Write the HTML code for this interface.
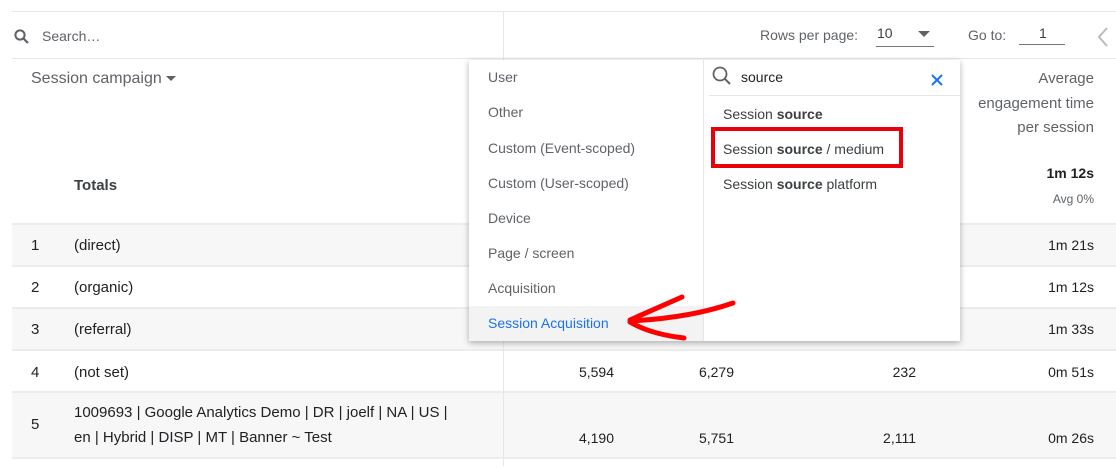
<!DOCTYPE html>
<html><head><style>
body{margin:0;width:1116px;height:466px;overflow:hidden;background:#fff;font-family:"Liberation Sans",Arial,sans-serif;color:#3c4043;position:relative}
.a{position:absolute;white-space:nowrap}
.hl{position:absolute;left:12px;right:0;height:1px;background:#e6e6e6}
.row{position:absolute;left:12px;right:0;border-top:2px solid #ececec}
.g{background:#f7f7f7}
.n{font-size:15px;color:#202124}
.r{text-align:right}
.m{font-size:14px;color:#5f6368}
.mi{position:absolute;left:488px;font-size:14px;color:#5f6368}
</style></head><body>
<div class="hl" style="top:11px"></div>
<div class="hl" style="top:58px"></div>
<div class="a" style="left:503px;top:12px;width:1px;height:454px;background:#e6e6e6"></div>
<svg class="a" style="left:13px;top:28px" width="18" height="18" viewBox="0 0 18 18"><circle cx="7" cy="7" r="4.6" fill="none" stroke="#5f6368" stroke-width="2"/><path d="M10.3 10.3L15 15" stroke="#5f6368" stroke-width="2.2"/></svg>
<div class="a m" style="left:42px;top:28px">Search…</div>
<div class="a m" style="left:760px;top:27px;font-size:14px">Rows per page:</div>
<div class="a m" style="left:877px;top:25px;color:#3c4043">10</div>
<div class="a" style="left:876px;top:46px;width:58px;height:1px;background:#777"></div>
<div class="a" style="left:918px;top:31px;width:0;height:0;border-left:6px solid transparent;border-right:6px solid transparent;border-top:6px solid #5f6368"></div>
<div class="a m" style="left:968px;top:27px">Go to:</div>
<div class="a m" style="left:1039px;top:25px;color:#3c4043">1</div>
<div class="a" style="left:1019px;top:44px;width:46px;height:1px;background:#777"></div>
<svg class="a" style="left:1096px;top:26px" width="14" height="22"><path d="M11 2L3 11L11 20" fill="none" stroke="#bbb" stroke-width="2"/></svg>
<div class="a" style="left:31px;top:70px;font-size:16px;color:#5f6368">Session campaign <span style="display:inline-block;width:0;height:0;border-left:5px solid transparent;border-right:5px solid transparent;border-top:5px solid #5f6368;vertical-align:middle"></span></div>
<div class="a n" style="left:74px;top:177px;font-weight:bold;color:#3c4043;font-size:15px">Totals</div>
<div class="a r" style="right:22px;top:67px;font-size:15px;color:#5f6368;line-height:24.5px">Average<br>engagement time<br>per session</div>
<div class="a" style="right:22px;top:165px;font-size:14px;font-weight:bold;color:#202124">1m 12s</div>
<div class="a" style="right:22px;top:192px;font-size:12px;color:#5f6368">Avg 0%</div>

<div class="row g" style="top:223px;height:41px"></div>
<div class="row" style="top:265px;height:41px"></div>
<div class="row g" style="top:307px;height:41px"></div>
<div class="row" style="top:349px;height:41px"></div>
<div class="row g" style="top:391px;height:66px"></div>
<div class="row" style="top:457px;height:10px"></div>
<div class="a" style="left:503px;top:223px;width:1px;height:243px;background:#e6e6e6"></div>

<div class="a n" style="left:31px;top:237px">1</div><div class="a n" style="left:74px;top:237px">(direct)</div><div class="a n" style="right:22px;top:237px;font-size:14px">1m 21s</div>
<div class="a n" style="left:31px;top:279px">2</div><div class="a n" style="left:74px;top:279px">(organic)</div><div class="a n" style="right:22px;top:279px;font-size:14px">1m 12s</div>
<div class="a n" style="left:31px;top:321px">3</div><div class="a n" style="left:74px;top:321px">(referral)</div><div class="a n" style="right:22px;top:321px;font-size:14px">1m 33s</div>
<div class="a n" style="left:31px;top:364px">4</div><div class="a n" style="left:74px;top:364px">(not set)</div>
<div class="a n" style="right:502px;top:364px;font-size:14px">5,594</div><div class="a n" style="right:382px;top:364px;font-size:14px">6,279</div><div class="a n" style="right:200px;top:364px;font-size:14px">232</div><div class="a n" style="right:22px;top:364px;font-size:14px">0m 51s</div>
<div class="a n" style="left:31px;top:416px">5</div><div class="a n" style="left:74px;top:400px;line-height:25px">1009693 | Google Analytics Demo | DR | joelf | NA | US |<br>en | Hybrid | DISP | MT | Banner ~ Test</div>
<div class="a n" style="right:502px;top:430px;font-size:14px">4,190</div><div class="a n" style="right:382px;top:430px;font-size:14px">5,751</div><div class="a n" style="right:200px;top:430px;font-size:14px">2,111</div><div class="a n" style="right:22px;top:430px;font-size:14px">0m 26s</div>

<div class="a" style="left:469px;top:60px;width:491px;height:281px;background:#fff;box-shadow:0 2px 6px rgba(0,0,0,.3)"></div>
<div class="a" style="left:469px;top:306px;width:234px;height:35px;background:#f3f3f3"></div>
<div class="a" style="left:703px;top:60px;width:1px;height:281px;background:#e6e6e6"></div>
<div class="mi" style="top:69px">User</div>
<div class="mi" style="top:104px">Other</div>
<div class="mi" style="top:140px">Custom (Event-scoped)</div>
<div class="mi" style="top:175px">Custom (User-scoped)</div>
<div class="mi" style="top:210px">Device</div>
<div class="mi" style="top:245px">Page / screen</div>
<div class="mi" style="top:280px">Acquisition</div>
<div class="mi" style="top:315px;color:#1a73e8">Session Acquisition</div>
<svg class="a" style="left:711px;top:65px" width="22" height="22"><circle cx="9" cy="9" r="6.5" fill="none" stroke="#5f6368" stroke-width="1.8"/><path d="M13.6 13.6L19 19" stroke="#5f6368" stroke-width="2"/></svg>
<div class="a" style="left:741px;top:69px;font-size:14px;color:#202124">source</div>
<svg class="a" style="left:930px;top:73px" width="14" height="14"><path d="M2 2L12 12M12 2L2 12" stroke="#1a73e8" stroke-width="2"/></svg>
<div class="a" style="left:709px;top:95px;width:251px;height:1px;background:#e6e6e6"></div>
<div class="a m" style="left:723px;top:106px;color:#3c4043">Session <b>source</b></div>
<div class="a" style="left:711px;top:127px;width:184px;height:33px;border:4px solid #e8000b"></div>
<div class="a m" style="left:723px;top:141px;color:#3c4043">Session <b>source</b> / medium</div>
<div class="a m" style="left:723px;top:176px;color:#3c4043">Session <b>source</b> platform</div>
<svg class="a" style="left:0;top:0" width="1116" height="466"><g fill="none" stroke="#f00" stroke-width="5" stroke-linecap="round"><path d="M733 303Q690 318 630 321"/><path d="M630 320L682 297"/><path d="M630 322Q650 334 684 338"/></g></svg>
</body></html>
